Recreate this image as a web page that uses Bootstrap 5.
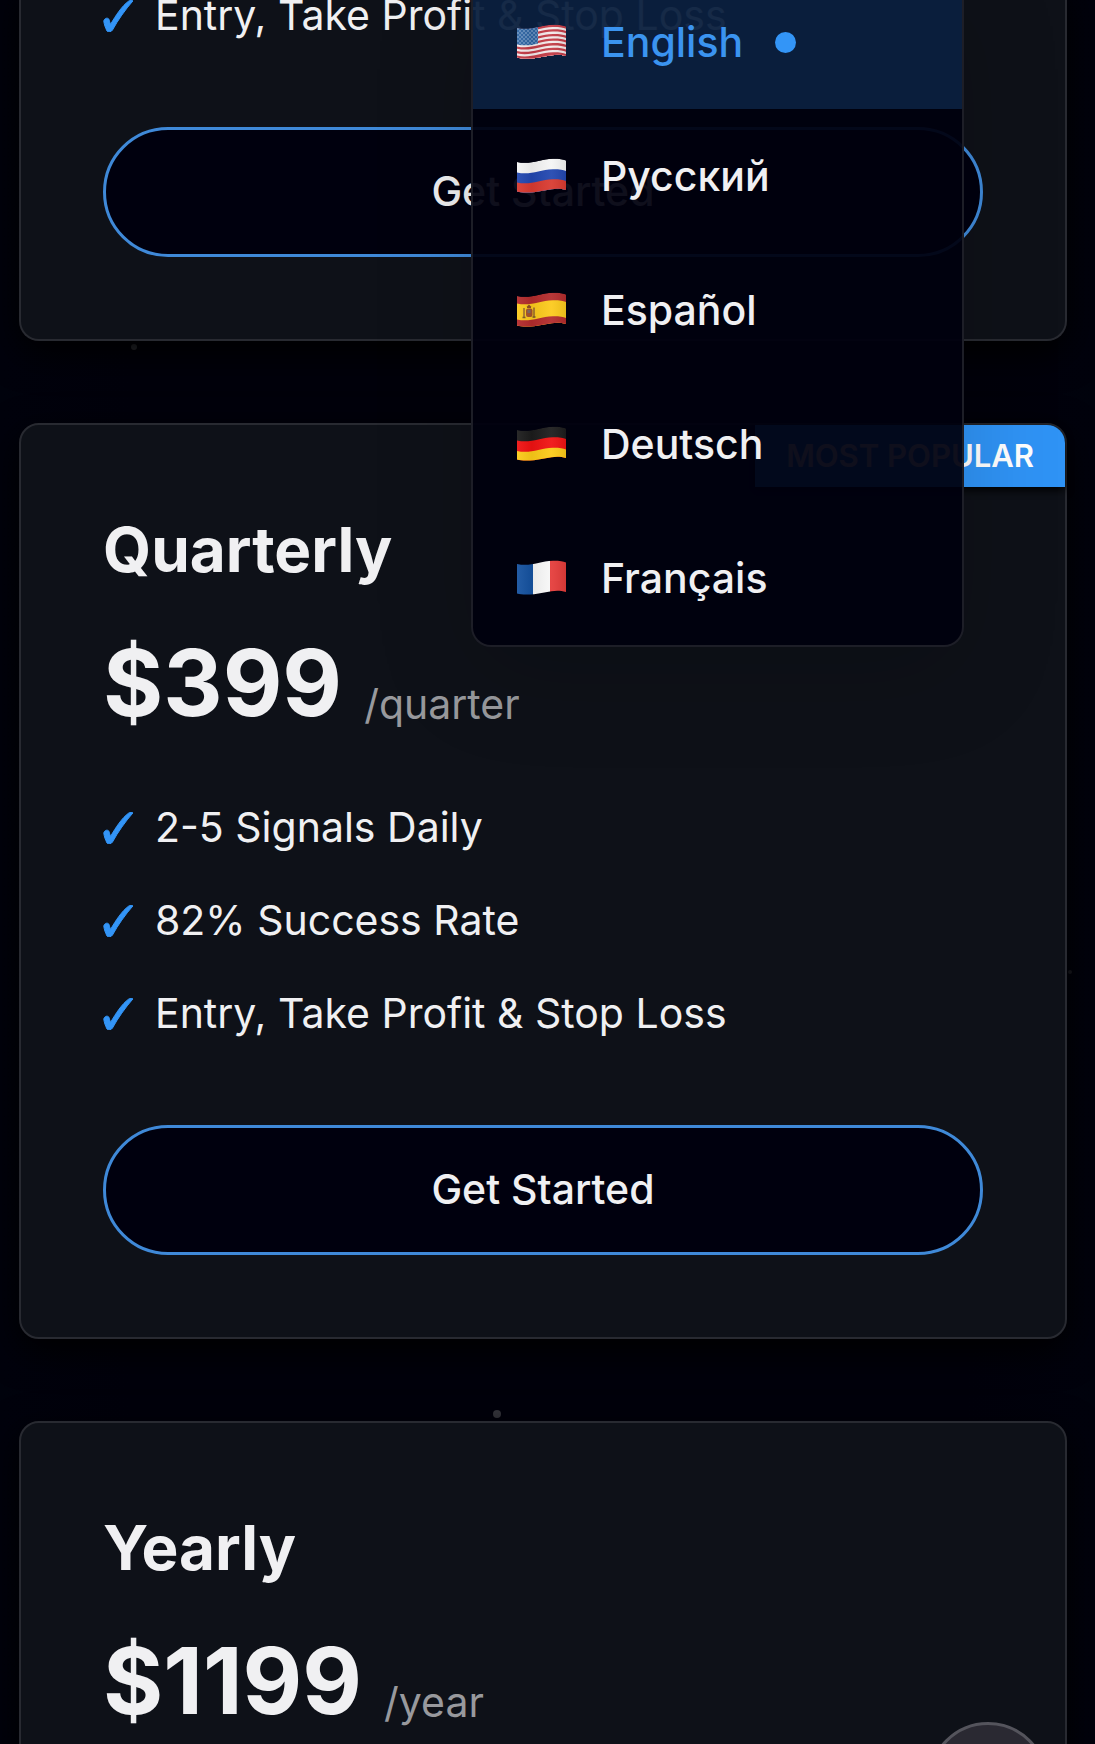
<!DOCTYPE html>
<html lang="en">
<head>
<meta charset="utf-8">
<meta name="viewport" content="width=device-width, initial-scale=1">
<title>Pricing</title>
<link href="https://cdn.jsdelivr.net/npm/bootstrap@5.3.0/dist/css/bootstrap.min.css" rel="stylesheet">
<style>
  body { background: #01010b; color: #f0f0f2; font-family: Inter, "Liberation Sans", sans-serif; font-size: 41px; line-height: 65px; }
  .screen { height: 100vh; background: linear-gradient(90deg, #00020c, #01010b 12%, #01010b 88%, #00020c); }
  .stars { position: absolute; inset: 0; width: 100%; height: 100%; }
  .plans { gap: 82px; padding: 0 28px 0 19px; }
  .plan { background: #0e1118; border: 2px solid #282a31; border-radius: 20px; padding: 82px; color: inherit; box-shadow: 0 12px 36px #000; }
  .plan-cut { margin-top: -17px; padding-top: 0; border-top: 0; border-radius: 0 0 20px 20px; }
  .plan-name { font-size: 62px; line-height: 86px; font-weight: 700; margin-bottom: 34px; }
  .plan-price { gap: 22px; margin-bottom: 56px; }
  .amount { font-size: 92px; line-height: 112px; font-weight: 700; }
  .period { line-height: 70px; color: #98999d; }
  .features { gap: 28px; margin-bottom: 79px; }
  .features li { gap: 22px; }
  .tick { width: 30px; height: 32px; fill: #3395f7; stroke: #3395f7; }
  .btn-plan { height: 130px; font-size: 41px; font-weight: 500; color: #f0f0f2; background: #00000e; border: 3px solid #3f89d8; border-radius: 65px; }
  .btn-plan:hover { color: #fff; background: #08203c; border-color: #3f89d8; }
  .ribbon { position: absolute; top: 0; right: 0; padding: 0 31px; font-size: 31px; line-height: 62px; font-weight: 600; color: #fff; background: #2f93f5; border-radius: 0 18px 0 0; box-shadow: 0 3px 8px #000; }
  .lang-menu { position: absolute; top: -25px; right: 131px; width: 493px; background: rgba(0, 0, 14, .94); border: 2px solid #1d1e27; border-top: 0; border-radius: 0 0 20px 20px; box-shadow: 0 27px 100px rgba(0, 0, 0, .15); }
  .lang { height: 134px; padding: 0 44px; gap: 35px; font-size: 41px; font-weight: 500; color: #f0f0f2; background: none; border: 0; }
  .lang:hover { background: #08182d; }
  .lang.current { color: #3b94f0; background: rgba(51, 149, 247, .2); }
  .lang svg { width: 49px; height: 36px; }
  .lang-dot { width: 21px; height: 21px; border-radius: 50%; background: #3395f7; margin-left: -3px; }
  .to-top { position: absolute; right: 47px; bottom: -98px; width: 120px; height: 120px; border: 3px solid #54545c; border-radius: 50%; background: #2a2932; }
</style>
</head>
<body>
<svg width="0" height="0" class="position-absolute" aria-hidden="true">
  <defs>
    <clipPath id="cloth"><path d="M0 4C14 7 22 1 36 .7C42 .6 46 1.3 49 2.4V32C38 28.500 28 33 17 34.200C9 35 4 34.600 0 33.500Z"/></clipPath>
    <path id="band" d="M0 4C14 7 22 1 36 .7C42 .6 46 1.3 49 2.4V50H0Z"/>
    <linearGradient id="shine" x1="0" x2="1" y1="0" y2="0">
      <stop offset="0" stop-color="#fff" stop-opacity=".06"/><stop offset=".3" stop-color="#000" stop-opacity=".06"/>
      <stop offset=".7" stop-color="#fff" stop-opacity=".06"/><stop offset="1" stop-color="#000" stop-opacity=".08"/>
    </linearGradient>
    <pattern id="dots" width="4" height="4" patternUnits="userSpaceOnUse"><rect width="4" height="4" fill="#2f65a3"/><circle cx="1" cy="1" r=".7" fill="#b5cbe5"/><circle cx="3" cy="3" r=".7" fill="#b5cbe5"/></pattern>
    <symbol id="tick" viewBox="0 0 30 32"><path d="M28 .5L30 .8C22 10 15 20 9.500 30C8.500 32 5 32.300 4 31C2.500 28 1 24 .8 21C1.500 18 4.500 17.500 5.800 19C6.500 21 7 23 7.500 24.500C13 15 19 6 25.500 1.200C26.500 .6 27 .5 28 .5Z"/></symbol>
  </defs>
</svg>
<div class="screen position-relative overflow-hidden">
  <svg class="stars" aria-hidden="true"><circle cx="134" cy="347" r="3" fill="#34363d"/><circle cx="497" cy="1414" r="4" fill="#36363d"/><circle cx="1070" cy="972" r="2" fill="#1c1d24"/></svg>

  <main class="plans d-flex flex-column">
    <section class="card plan plan-cut">
      <ul class="features list-unstyled d-flex flex-column">
        <li class="d-flex align-items-center"><svg class="tick" aria-hidden="true"><use href="#tick"/></svg>Entry, Take Profit &amp; Stop Loss</li>
      </ul>
      <button type="button" class="btn btn-plan w-100">Get Started</button>
    </section>

    <section class="card plan">
      <span class="ribbon">MOST POPULAR</span>
      <h2 class="plan-name">Quarterly</h2>
      <div class="plan-price d-flex align-items-end"><span class="amount">$399</span><span class="period">/quarter</span></div>
      <ul class="features list-unstyled d-flex flex-column">
        <li class="d-flex align-items-center"><svg class="tick" aria-hidden="true"><use href="#tick"/></svg>2-5 Signals Daily</li>
        <li class="d-flex align-items-center"><svg class="tick" aria-hidden="true"><use href="#tick"/></svg>82% Success Rate</li>
        <li class="d-flex align-items-center"><svg class="tick" aria-hidden="true"><use href="#tick"/></svg>Entry, Take Profit &amp; Stop Loss</li>
      </ul>
      <button type="button" class="btn btn-plan w-100">Get Started</button>
    </section>

    <section class="card plan">
      <h2 class="plan-name">Yearly</h2>
      <div class="plan-price d-flex align-items-end"><span class="amount">$1199</span><span class="period">/year</span></div>
    </section>
  </main>

  <nav class="lang-menu" aria-label="Language">
    <button type="button" class="lang current w-100 d-flex align-items-center">
      <svg viewBox="0 0 49 36" aria-hidden="true"><g clip-path="url(#cloth)"><use href="#band" fill="#c23a45"/>
        <use href="#band" y="2.3" fill="#f3e9ea"/><use href="#band" y="4.600" fill="#c23a45"/><use href="#band" y="6.900" fill="#f3e9ea"/><use href="#band" y="9.200" fill="#c23a45"/><use href="#band" y="11.500" fill="#f3e9ea"/><use href="#band" y="13.800" fill="#c23a45"/><use href="#band" y="16.100" fill="#f3e9ea"/><use href="#band" y="18.400" fill="#c23a45"/><use href="#band" y="20.700" fill="#f3e9ea"/><use href="#band" y="23" fill="#c23a45"/><use href="#band" y="25.300" fill="#f3e9ea"/><use href="#band" y="27.600" fill="#c23a45"/>
        <path d="M0 0H21V19.500C14 21.500 7 22 0 20.500Z" fill="url(#dots)"/><rect width="49" height="36" fill="url(#shine)"/></g></svg>
      <span>English</span><span class="lang-dot"></span>
    </button>
    <button type="button" class="lang w-100 d-flex align-items-center">
      <svg viewBox="0 0 49 36" aria-hidden="true"><g clip-path="url(#cloth)"><use href="#band" fill="#f5f5f5"/><use href="#band" y="10.500" fill="#2247b0"/><use href="#band" y="20.500" fill="#d93a30"/><rect width="49" height="36" fill="url(#shine)"/></g></svg>
      <span>Русский</span>
    </button>
    <button type="button" class="lang w-100 d-flex align-items-center">
      <svg viewBox="0 0 49 36" aria-hidden="true"><g clip-path="url(#cloth)"><use href="#band" fill="#b32b2c"/><use href="#band" y="7.500" fill="#fcca1c"/><use href="#band" y="23.500" fill="#b32b2c"/>
        <path d="M10 14.500L12 12.500L14 14.500V16H10Z" fill="#8c4b22"/><rect x="9" y="16.500" width="6.500" height="8.500" rx="2" fill="#a5522b"/><rect x="10.500" y="18" width="3" height="3" fill="#7c6a63"/><path d="M7 16V26M17 15.500V25.500" stroke="#93652f" stroke-width="1.500"/><path d="M5.500 25.500H8.500M15.500 25H18.500" stroke="#7c5a28" stroke-width="1.500"/><rect width="49" height="36" fill="url(#shine)"/></g></svg>
      <span>Español</span>
    </button>
    <button type="button" class="lang w-100 d-flex align-items-center">
      <svg viewBox="0 0 49 36" aria-hidden="true"><g clip-path="url(#cloth)"><use href="#band" fill="#1c1c1c"/><use href="#band" y="10.500" fill="#f01212"/><use href="#band" y="21" fill="#fccb18"/><rect width="49" height="36" fill="url(#shine)"/></g></svg>
      <span>Deutsch</span>
    </button>
    <button type="button" class="lang w-100 d-flex align-items-center">
      <svg viewBox="0 0 49 36" aria-hidden="true"><g clip-path="url(#cloth)"><rect width="16" height="36" fill="#1552a0"/><rect x="16" width="17" height="36" fill="#f8f8f8"/><rect x="33" width="16" height="36" fill="#e53c3a"/><rect width="49" height="36" fill="url(#shine)"/></g></svg>
      <span>Français</span>
    </button>
  </nav>

  <button type="button" class="to-top" aria-label="Back to top"></button>
</div>
<script src="https://cdn.jsdelivr.net/npm/bootstrap@5.3.0/dist/js/bootstrap.bundle.min.js"></script>
</body>
</html>
